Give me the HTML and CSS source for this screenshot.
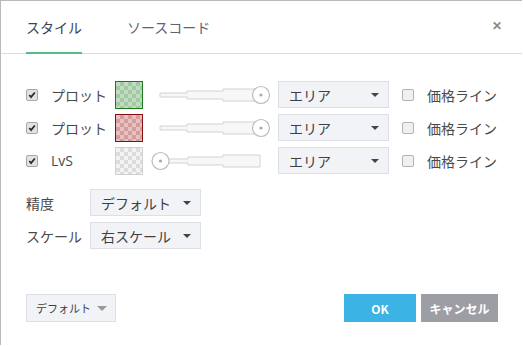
FILE: index.html
```html
<!DOCTYPE html>
<html lang="ja">
<head>
    <meta charset="UTF-8">
    <title>スタイル</title>
    <link rel="stylesheet" href="styles.css">
</head>
<body>
<section class="dialog">

    <header class="tabs">
        <div class="tab active">スタイル</div>
        <div class="tab">ソースコード</div>
        <div class="close">&#x2715;</div>
    </header>

    <section class="content">
        <div class="row">
            <span class="chk on"><svg viewBox="0 0 11 11"><path d="M2.5 5.5 L4.5 7.8 L8.6 2.8" /></svg></span>
            <span class="name">プロット</span>
            <span class="swatch green"></span>
            <svg class="slider" viewBox="0 0 120 20">
                <path class="track" d="M9 8 H36 V6 H72 V4 H104 V16 H72 V14 H36 V12 H9 Z"/>
                <circle class="knob" cx="110" cy="10" r="8.5"/>
                <circle class="dot" cx="110" cy="10" r="1.6"/>
            </svg>
            <div class="select wide"><span>エリア</span><i class="caret"></i></div>
            <span class="chk"></span>
            <span class="extra">価格ライン</span>
        </div>
        <div class="row">
            <span class="chk on"><svg viewBox="0 0 11 11"><path d="M2.5 5.5 L4.5 7.8 L8.6 2.8" /></svg></span>
            <span class="name">プロット</span>
            <span class="swatch red"></span>
            <svg class="slider" viewBox="0 0 120 20">
                <path class="track" d="M9 8 H36 V6 H72 V4 H104 V16 H72 V14 H36 V12 H9 Z"/>
                <circle class="knob" cx="110" cy="10" r="8.5"/>
                <circle class="dot" cx="110" cy="10" r="1.6"/>
            </svg>
            <div class="select wide"><span>エリア</span><i class="caret"></i></div>
            <span class="chk"></span>
            <span class="extra">価格ライン</span>
        </div>
        <div class="row">
            <span class="chk on"><svg viewBox="0 0 11 11"><path d="M2.5 5.5 L4.5 7.8 L8.6 2.8" /></svg></span>
            <span class="name latin">LvS</span>
            <span class="swatch grey"></span>
            <svg class="slider" viewBox="0 0 120 20">
                <path class="track" d="M16 8 H37 V6 H72 V4 H109 V16 H72 V14 H37 V12 H16 Z"/>
                <circle class="knob" cx="9.5" cy="10" r="8.5"/>
                <circle class="dot" cx="9.5" cy="10" r="1.6"/>
            </svg>
            <div class="select wide"><span>エリア</span><i class="caret"></i></div>
            <span class="chk"></span>
            <span class="extra">価格ライン</span>
        </div>

        <div class="opts">
            <div class="opt">
                <span class="optLabel">精度</span>
                <div class="select wide"><span>デフォルト</span><i class="caret"></i></div>
            </div>
            <div class="opt">
                <span class="optLabel">スケール</span>
                <div class="select wide"><span>右スケール</span><i class="caret"></i></div>
            </div>
        </div>
    </section>

    <footer class="footer">
        <div class="defBtn"><span>デフォルト</span><i class="caret light"></i></div>
        <div class="btns">
            <button type="button" class="ok">OK</button>
            <button type="button" class="cancel">キャンセル</button>
        </div>
    </footer>

</section>
</body>
</html>
```

FILE: styles.css
```css
html,body{
    margin:0;
    padding:0;
    background:#fff;
}
.dialog{
    width:522px;
    height:345px;
    border-top:1px solid #b9b9b9;
    border-left:1px solid #b9b9b9;
    font-family:"Noto Sans CJK JP","Noto Sans",sans-serif;
    color:#4a4a4a;
    display:flex;
    flex-direction:column;
    box-sizing:border-box;
}
.tabs{
    height:52px;
    border-bottom:1px solid #dcdcdc;
    display:flex;
    align-items:stretch;
    padding-left:25px;
    padding-right:20px;
}
.tab{
    font-size:14px;
    color:#5d6470;
    display:flex;
    align-items:center;
    margin-right:45px;
    padding-top:1px;
    border-bottom:2px solid transparent;
    margin-bottom:-1px;
}
.tab.active{
    color:#3b4350;
    border-bottom-color:#58b98a;
}
.close{
    margin-left:auto;
    font-size:12px;
    font-weight:bold;
    color:#8a8a8a;
    padding-top:15px;
}
.content{
    padding:27px 0 0 25px;
}
.row{
    display:flex;
    align-items:center;
    height:27px;
    margin-bottom:6px;
}
.chk{
    width:10px;
    height:10px;
    border:1px solid #b3b3b3;
    border-radius:2px;
    background:#f0f0f0;
    display:inline-block;
    flex:none;
}
.chk.on{
    background:#e2e2e2;
    border-color:#a7a7a7;
}
.chk svg{
    display:block;
    width:10px;
    height:10px;
}
.chk svg path{
    fill:none;
    stroke:#2c2c2c;
    stroke-width:2;
}
.name{
    width:64px;
    margin-left:13px;
    font-size:14px;
    color:#4a4a4a;
}
.latin{
    font-family:"Open Sans","Noto Sans",sans-serif;
    font-size:14px;
}
.swatch{
    width:26px;
    height:26px;
    border:1px solid;
    flex:none;
    background-size:8px 8px;
    background-position:0 0,4px 4px;
}
.swatch.green{
    border-color:#1f7a1f;
    background-color:#c2dcc2;
    background-image:linear-gradient(45deg,#a2c9a2 25%,transparent 25%,transparent 75%,#a2c9a2 75%),linear-gradient(45deg,#a2c9a2 25%,transparent 25%,transparent 75%,#a2c9a2 75%);
}
.swatch.red{
    border-color:#8a0f0f;
    background-color:#e6c1c1;
    background-image:linear-gradient(45deg,#d59c9c 25%,transparent 25%,transparent 75%,#d59c9c 75%),linear-gradient(45deg,#d59c9c 25%,transparent 25%,transparent 75%,#d59c9c 75%);
}
.swatch.grey{
    border-color:#d0d0d0;
    background-color:#f3f3f3;
    background-image:linear-gradient(45deg,#dcdcdc 25%,transparent 25%,transparent 75%,#dcdcdc 75%),linear-gradient(45deg,#dcdcdc 25%,transparent 25%,transparent 75%,#dcdcdc 75%);
}
.slider{
    width:120px;
    height:20px;
    margin-left:8px;
    flex:none;
}
.track{
    fill:#f7f7f8;
    stroke:#d2d3d6;
    stroke-width:1;
}
.knob{
    fill:#fff;
    stroke:#b9bcc4;
    stroke-width:1.2;
}
.dot{
    fill:#a7aab1;
}
.select{
    height:25px;
    box-sizing:border-box;
    border:1px solid #dcdfe5;
    background:#f2f3f7;
    display:flex;
    align-items:center;
    padding:0 9px 0 10px;
    font-size:14px;
    color:#3f3f3f;
    flex:none;
    white-space:nowrap;
}
.select.wide{
    width:111px;
    height:27px;
}
.row .select{
    margin-left:7px;
}
.row .chk:not(.on){
    margin-left:13px;
}
.caret{
    margin-left:auto;
    width:0;
    height:0;
    border-left:4px solid transparent;
    border-right:4px solid transparent;
    border-top:4px solid #444;
}
.caret.light{
    border-top-color:#9a9a9a;
    border-left-width:5px;
    border-right-width:5px;
    border-top-width:5px;
}
.extra{
    margin-left:13px;
    font-size:14px;
    color:#4a4a4a;
}
.opts{
    margin-top:15px;
}
.opt{
    display:flex;
    align-items:center;
    margin-bottom:6px;
}
.optLabel{
    width:64px;
    font-size:14px;
    color:#4a4a4a;
    white-space:nowrap;
}
.footer{
    margin-top:auto;
    margin-bottom:23px;
    padding:0 24px 0 25px;
    display:flex;
    align-items:center;
}
.defBtn{
    height:28px;
    box-sizing:border-box;
    width:90px;
    border:1px solid #dcdfe5;
    background:#f2f3f7;
    display:flex;
    align-items:center;
    padding:0 8px 0 9px;
    font-size:11px;
    color:#3f3f3f;
    white-space:nowrap;
}
.btns{
    margin-left:auto;
    display:flex;
    gap:5px;
}
button{
    height:28px;
    border:none;
    color:#fff;
    font-family:"Noto Sans CJK JP","Noto Sans",sans-serif;
    font-weight:bold;
    font-size:12px;
    padding:0;
}
button.ok{
    width:72px;
    background-color:#3bb3e4;
}
button.cancel{
    width:77px;
    background-color:#9c9ea4;
}
```
